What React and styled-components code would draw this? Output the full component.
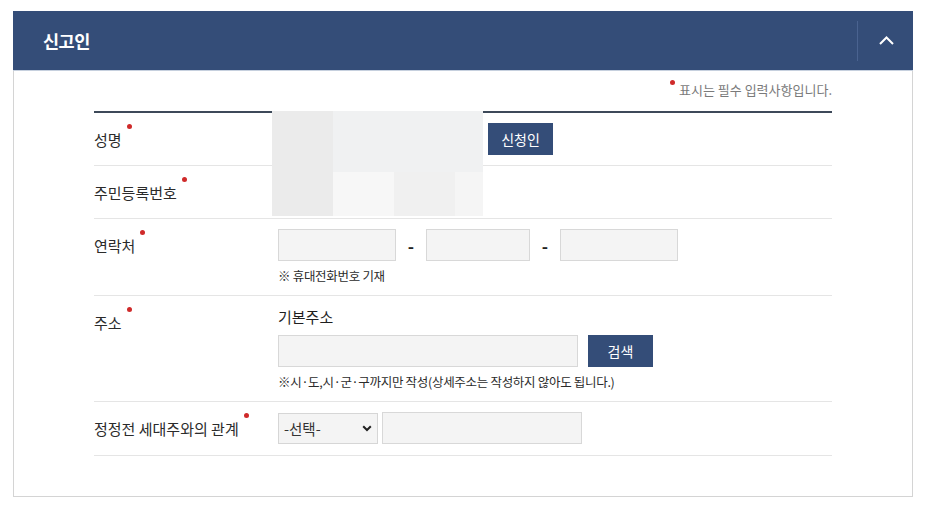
import React from "react";
import styled, { createGlobalStyle } from "styled-components";

const Global = createGlobalStyle`
  html, body { margin: 0; padding: 0; background: #fff; }
  body { font-family: "Noto Sans CJK KR", "Noto Sans", sans-serif; color: #333; }
  * { box-sizing: border-box; }
`;

const Page = styled.div`
  padding: 11px 13px 0;
`;

const Card = styled.section`
  width: 900px;
  display: flex;
  flex-direction: column;
`;

const Header = styled.header`
  height: 60px;
  background: #344d78;
  border-bottom: 1px solid #c6d0de;
  display: flex;
  align-items: center;
  justify-content: space-between;
`;

const Title = styled.h2`
  margin: 0 0 0 30px;
  font-size: 17.5px;
  font-weight: 700;
  color: #fff;
  letter-spacing: -0.5px;
`;

const Toggle = styled.button`
  width: 56px;
  height: 40px;
  border: 0;
  border-left: 1px solid #4a6390;
  background: transparent;
  display: flex;
  align-items: center;
  justify-content: center;
  padding: 0 0 0 1px;
  cursor: pointer;
`;

const Body = styled.div`
  border: 1px solid #d4d4d4;
  border-top: 0;
  padding: 0 80px 40px;
`;

const RequiredNote = styled.p`
  margin: 0;
  padding: 10px 0 0;
  height: 40px;
  text-align: right;
  font-size: 13px;
  line-height: 18px;
  color: #7a7a7a;
`;

const Dot = styled.span`
  display: inline-block;
  width: 5px;
  height: 5px;
  border-radius: 50%;
  background: #cf2a2a;
  vertical-align: top;
  position: relative;
  top: ${(p) => (p.$note ? "-1px" : "-5px")};
  margin: ${(p) => (p.$note ? "0 4px 0 0" : "0 0 0 5px")};
`;

const Table = styled.div`
  position: relative;
  border-top: 2px solid #3d4959;
`;

const Row = styled.div`
  display: grid;
  grid-template-columns: 184px 1fr;
  border-bottom: 1px solid #e5e5e5;
`;

const Label = styled.div`
  padding: 16px 0 14px;
  font-size: 15px;
  line-height: 22px;
  color: #2b2b2b;
  letter-spacing: 0;
`;

const Cell = styled.div`
  padding: ${(p) => p.$pad || "10px 0"};
  display: flex;
  flex-direction: column;
  align-items: flex-start;
`;

const Line = styled.div`
  display: flex;
  align-items: center;
  gap: ${(p) => p.$gap || "10px"};
`;

const Input = styled.input`
  width: ${(p) => p.$w}px;
  height: 32px;
  border: 1px solid #d8d8d8;
  background: #f4f4f4;
  padding: 0 8px;
  font: inherit;
  font-size: 14px;
  outline: none;
`;

const Button = styled.button`
  width: 65px;
  height: 32px;
  border: 0;
  background: #344d78;
  color: #fff;
  font-family: inherit;
  font-size: 14px;
  padding: 0;
  cursor: pointer;
`;

const Dash = styled.span`
  width: 30px;
  text-align: center;
  font-size: 17px;
  font-weight: 700;
  color: #222;
`;

const Hint = styled.p`
  margin: 6px 0 0;
  font-size: 12.5px;
  line-height: 18px;
  color: #2b2b2b;
  letter-spacing: -0.3px;
`;

const SubTitle = styled.div`
  font-size: 15px;
  line-height: 22px;
  font-weight: 400;
  color: #1f1f1f;
  margin-bottom: 7px;
`;

const SelectWrap = styled.div`
  position: relative;
  width: 100px;
  height: 31px;
  svg {
    position: absolute;
    right: 6px;
    top: 12px;
    pointer-events: none;
  }
`;

const Select = styled.select`
  appearance: none;
  width: 100%;
  height: 100%;
  border: 1px solid #d6d6d6;
  background: #f4f4f4;
  padding: 0 0 0 5px;
  font-family: inherit;
  font-size: 14.5px;
  color: #333;
  outline: none;
`;

const Mosaic = styled.div`
  position: absolute;
  left: 178px;
  top: -2px;
  width: 211px;
  height: 105px;
  display: grid;
  grid-template-columns: 61px 61px 61px 28px;
  grid-template-rows: 61px 44px;
`;

const Tile = styled.div`
  background: ${(p) => p.$c};
`;

const tiles = [
  "#ebebeb", "#f0f1f2", "#f0f1f2", "#f0f1f2",
  "#ebebeb", "#f7f7f7", "#f0f0f0", "#f5f5f5",
];

function Req() {
  return <Dot />;
}

export default function App() {
  return (
    <Page>
      <Global />
      <Card>
        <Header>
          <Title>신고인</Title>
          <Toggle aria-label="접기">
            <svg width="15" height="9" viewBox="0 0 15 9">
              <path d="M1 8 L7.5 1.5 L14 8" fill="none" stroke="#fff" strokeWidth="2" />
            </svg>
          </Toggle>
        </Header>
        <Body>
          <RequiredNote>
            <Dot $note />표시는 필수 입력사항입니다.
          </RequiredNote>
          <Table>
            <Row>
              <Label>성명<Req /></Label>
              <Cell>
                <Line>
                  <Input $w={200} />
                  <Button>신청인</Button>
                </Line>
              </Cell>
            </Row>
            <Row>
              <Label>주민등록번호<Req /></Label>
              <Cell>
                <Line>
                  <Input $w={90} />
                  <Input $w={90} />
                </Line>
              </Cell>
            </Row>
            <Row>
              <Label>연락처<Req /></Label>
              <Cell>
                <Line $gap="0">
                  <Input $w={118} />
                  <Dash>-</Dash>
                  <Input $w={104} />
                  <Dash>-</Dash>
                  <Input $w={118} />
                </Line>
                <Hint>※ 휴대전화번호 기재</Hint>
              </Cell>
            </Row>
            <Row>
              <Label>주소<Req /></Label>
              <Cell>
                <SubTitle>기본주소</SubTitle>
                <Line>
                  <Input $w={300} />
                  <Button>검색</Button>
                </Line>
                <Hint>※시·도,시·군·구까지만 작성(상세주소는 작성하지 않아도 됩니다.)</Hint>
              </Cell>
            </Row>
            <Row>
              <Label>정정전 세대주와의 관계<Req /></Label>
              <Cell $pad="10px 0 11px">
                <Line $gap="4px">
                  <SelectWrap>
                    <Select defaultValue="">
                      <option value="">-선택-</option>
                      <option value="1">본인</option>
                      <option value="2">배우자</option>
                    </Select>
                    <svg width="10" height="7" viewBox="0 0 10 7">
                      <path d="M1.2 1.2 L5 5 L8.8 1.2" fill="none" stroke="#222" strokeWidth="2" />
                    </svg>
                  </SelectWrap>
                  <Input $w={200} />
                </Line>
              </Cell>
            </Row>
            <Mosaic aria-hidden="true">
              {tiles.map((c, i) => (
                <Tile key={i} $c={c} />
              ))}
            </Mosaic>
          </Table>
        </Body>
      </Card>
    </Page>
  );
}
